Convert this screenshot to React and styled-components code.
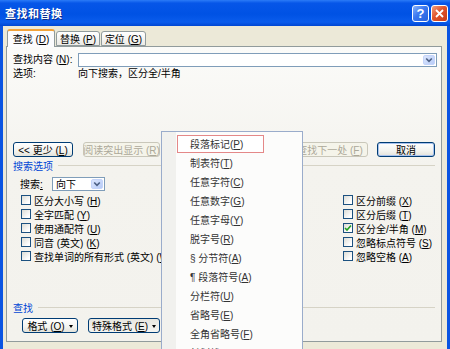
import React from 'react'
import styled, { createGlobalStyle } from 'styled-components'

const GlobalStyle = createGlobalStyle`
  html, body { margin: 0; padding: 0; }
  body {
    font-family: "Liberation Sans", "Noto Sans CJK SC", sans-serif;
    font-size: 10px;
    color: #000;
    background: #ECE9D8;
  }
  u { text-decoration: underline; text-underline-offset: 1px; }
`

const Window = styled.div`
  position: relative;
  width: 450px;
  height: 349px;
  overflow: hidden;
  display: flex;
  flex-direction: column;
  background: #ECE9D8;
`

const TitleBar = styled.div`
  height: 26px;
  flex: none;
  display: flex;
  align-items: center;
  padding: 0 2px 0 5px;
  box-sizing: border-box;
  background: linear-gradient(#2B7BF7, #0656E8 12%, #0052E4 55%, #0A5CEC 85%, #0046D2);
`

const Title = styled.span`
  color: #fff;
  font-weight: bold;
  font-size: 11px;
  letter-spacing: 0.5px;
  text-shadow: 1px 1px 0 #0A2A8A;
`

const TitleButtons = styled.div`
  margin-left: auto;
  display: flex;
  gap: 2px;
`

const TitleButton = styled.div`
  width: 17px;
  height: 17px;
  box-sizing: border-box;
  border: 1px solid #fff;
  border-radius: 3px;
  display: flex;
  align-items: center;
  justify-content: center;
  color: #fff;
  font: bold 13px "Liberation Sans", sans-serif;
  background: ${p => p.$close
    ? 'linear-gradient(135deg, #F0A080, #E0542C 45%, #C83A16)'
    : 'linear-gradient(135deg, #8AB4FC, #3A78F0 45%, #2A62DC)'};
`

const Frame = styled.div`
  flex: 1;
  display: flex;
  flex-direction: column;
  border-left: 3px solid #0A54E2;
  border-right: 3px solid #0A54E2;
  padding: 3px 5px 0 3px;
`

const Tabs = styled.div`
  display: flex;
  align-items: flex-end;
  height: 17px;
  padding-left: 1px;
`

const Tab = styled.div`
  position: relative;
  z-index: ${p => (p.$active ? 2 : 1)};
  width: ${p => p.$w}px;
  height: ${p => (p.$active ? 18 : 15)}px;
  margin-bottom: ${p => (p.$active ? -1 : 0)}px;
  margin-left: ${p => (p.$first ? 0 : 1)}px;
  box-sizing: border-box;
  border: 1px solid #919B9C;
  border-bottom: ${p => (p.$active ? 'none' : '1px solid #919B9C')};
  border-top: ${p => (p.$active ? '2px solid #F2A33A' : '1px solid #919B9C')};
  border-radius: 3px 3px 0 0;
  background: ${p => (p.$active ? '#FCFCFE' : 'linear-gradient(#FFFFFF, #ECEBE6)')};
  display: flex;
  align-items: center;
  justify-content: center;
  padding-bottom: ${p => (p.$active ? 1 : 0)}px;
`

const Panel = styled.div`
  height: 296px;
  box-sizing: border-box;
  border: 1px solid #919B9C;
  background: linear-gradient(#FBFBF9, #F4F3EE 40%, #F3F2ED);
  padding: 6px 4px 0 6px;
  display: flex;
  flex-direction: column;
`

const FieldRow = styled.div`
  display: grid;
  grid-template-columns: 65px 1fr;
  align-items: center;
  height: ${p => p.$h}px;
  margin-top: ${p => p.$mt || 0}px;
  line-height: 12px;
`

const Combo = styled.div`
  height: ${p => p.$h || 14}px;
  width: ${p => (p.$w ? p.$w + 'px' : 'auto')};
  box-sizing: border-box;
  border: 1px solid #7F9DB9;
  background: #fff;
  display: flex;
  align-items: center;
  padding-left: 3px;
`

const ComboButton = styled.div`
  margin-left: auto;
  width: 12px;
  height: calc(100% - 2px);
  margin-right: 1px;
  box-sizing: border-box;
  border-radius: 2px;
  background: linear-gradient(135deg, #DCE6FD, #B8CCF8);
  border: 1px solid #C4D4FA;
  display: flex;
  align-items: center;
  justify-content: center;
`

const ButtonRow = styled.div`
  display: flex;
  align-items: center;
  gap: ${p => p.$gap || 8}px;
  margin-top: ${p => p.$mt}px;
  padding-left: ${p => p.$pl || 0}px;
`

const Button = styled.div`
  width: ${p => p.$w}px;
  height: 15px;
  margin-left: ${p => p.$ml || 0}px;
  box-sizing: border-box;
  border: 1px solid ${p => (p.$disabled ? '#C9C7BA' : '#003C74')};
  border-radius: 3px;
  color: ${p => (p.$disabled ? '#ACA899' : '#000')};
  background: ${p => p.$disabled
    ? '#F5F4EA'
    : p.$pressed
      ? 'linear-gradient(#E8E7E0, #F4F4F0)'
      : 'linear-gradient(#FFFFFF, #F3F3EF 60%, #E3E2DA)'};
  box-shadow: ${p => (p.$default ? 'inset 0 0 0 1px #A8C2EE' : 'none')};
  display: flex;
  align-items: center;
  justify-content: center;
  gap: 4px;
  white-space: nowrap;
`

const Caret = styled.span`
  width: 0;
  height: 0;
  border-left: 2.5px solid transparent;
  border-right: 2.5px solid transparent;
  border-top: 3px solid #000;
  margin-top: 1px;
`

const Heading = styled.div`
  display: flex;
  align-items: center;
  gap: 5px;
  height: 12px;
  margin-top: ${p => p.$mt}px;
  margin-right: 2px;
  color: #0046D5;
  &::after {
    content: '';
    flex: 1;
    height: 1px;
    background: #D6D3C6;
  }
`

const SearchRow = styled.div`
  display: flex;
  align-items: center;
  height: 13px;
  margin-top: 6px;
  padding-left: 7px;
`

const SearchLabel = styled.span`
  width: 32px;
`

const Checks = styled.div`
  display: grid;
  grid-template-columns: 322px auto;
  margin-top: 3px;
  padding-left: 8px;
`

const CheckColumn = styled.div`
  display: flex;
  flex-direction: column;
`

const CheckItem = styled.div`
  display: flex;
  align-items: center;
  gap: 3px;
  height: 14px;
  white-space: nowrap;
`

const Box = styled.span`
  width: 10px;
  height: 10px;
  box-sizing: border-box;
  border: 1px solid #1C5180;
  background: linear-gradient(135deg, #DCDCD5, #FFFFFF 80%);
  display: flex;
  align-items: center;
  justify-content: center;
`

const Menu = styled.div`
  position: absolute;
  left: 161px;
  top: 131px;
  width: 142px;
  height: 240px;
  box-sizing: border-box;
  border: 1px solid #9AACCB;
  background: linear-gradient(to right, #F1F1EE 0, #F1F1EE 14px, #FCFCFB 14px);
  padding-top: 2px;
  z-index: 10;
  color: #333;
`

const MenuItem = styled.div`
  height: 19px;
  display: flex;
  align-items: center;
  padding-left: 28px;
`

const MenuLabel = styled.span`
  display: inline-flex;
  align-items: center;
  height: 16px;
  margin-left: -13px;
  padding: 0 20px 0 12px;
  border: 1px solid ${p => (p.$active ? '#E48888' : 'transparent')};
  background: ${p => (p.$active ? '#FFFFFF' : 'transparent')};
  white-space: nowrap;
`

const Chevron = () => (
  <svg width="8" height="6" viewBox="0 0 8 6">
    <path d="M1.2 1.5 L4 4.3 L6.8 1.5" fill="none" stroke="#4D6185" strokeWidth="1.6" />
  </svg>
)

const Tick = () => (
  <svg width="8" height="8" viewBox="0 0 8 8">
    <path d="M1 4 L3 6 L7 1.5" fill="none" stroke="#21A121" strokeWidth="1.6" />
  </svg>
)

const leftChecks = [
  ['区分大小写 (', 'H', ')'],
  ['全字匹配 (', 'Y', ')'],
  ['使用通配符 (', 'U', ')'],
  ['同音 (英文) (', 'K', ')'],
  ['查找单词的所有形式 (英文) (', 'W', ')'],
]

const rightChecks = [
  ['区分前缀 (', 'X', ')'],
  ['区分后缀 (', 'T', ')'],
  ['区分全/半角 (', 'M', ')', true],
  ['忽略标点符号 (', 'S', ')'],
  ['忽略空格 (', 'A', ')'],
]

const menuItems = [
  ['段落标记(', 'P', ')'],
  ['制表符(', 'T', ')'],
  ['任意字符(', 'C', ')'],
  ['任意数字(', 'G', ')'],
  ['任意字母(', 'Y', ')'],
  ['脱字号(', 'R', ')'],
  ['§ 分节符(', 'A', ')'],
  ['¶ 段落符号(', 'A', ')'],
  ['分栏符(', 'U', ')'],
  ['省略号(', 'E', ')'],
  ['全角省略号(', 'F', ')'],
  ['长划线(', 'M', ')'],
]

const Check = ({ item }) => (
  <CheckItem>
    <Box>{item[3] && <Tick />}</Box>
    <span>{item[0]}<u>{item[1]}</u>{item[2]}</span>
  </CheckItem>
)

export default function App() {
  return (
    <Window>
      <GlobalStyle />
      <TitleBar>
        <Title>查找和替换</Title>
        <TitleButtons>
          <TitleButton>?</TitleButton>
          <TitleButton $close>
            <svg width="9" height="9" viewBox="0 0 9 9">
              <path d="M1 1 L8 8 M8 1 L1 8" stroke="#fff" strokeWidth="1.8" />
            </svg>
          </TitleButton>
        </TitleButtons>
      </TitleBar>

      <Frame>
        <Tabs>
          <Tab $active $first $w={48}><span>查找 (<u>D</u>)</span></Tab>
          <Tab $w={44}><span>替换 (<u>P</u>)</span></Tab>
          <Tab $w={45}><span>定位 (<u>G</u>)</span></Tab>
        </Tabs>

        <Panel>
          <FieldRow $h={14}>
            <span>查找内容 (<u>N</u>):</span>
            <Combo>
              <ComboButton><Chevron /></ComboButton>
            </Combo>
          </FieldRow>
          <FieldRow $h={12} $mt={1}>
            <span>选项:</span>
            <span>向下搜索，区分全/半角</span>
          </FieldRow>

          <ButtonRow $mt={62}>
            <Button $w={60}><span>&lt;&lt; 更少 (<u>L</u>)</span></Button>
            <Button $w={77} $ml={2} $disabled><span>阅读突出显示 (<u>R</u>)</span></Button>
            <Button $w={76} $ml={124} $disabled><span>查找下一处 (<u>F</u>)</span></Button>
            <Button $w={58} $ml={1} $default><span>取消</span></Button>
          </ButtonRow>

          <Heading $mt={2}>搜索选项</Heading>

          <SearchRow>
            <SearchLabel>搜索<u>:</u></SearchLabel>
            <Combo $w={53} $h={14}>
              <span>向下</span>
              <ComboButton><Chevron /></ComboButton>
            </Combo>
          </SearchRow>

          <Checks>
            <CheckColumn>
              {leftChecks.map((c, i) => <Check key={i} item={c} />)}
            </CheckColumn>
            <CheckColumn>
              {rightChecks.map((c, i) => <Check key={i} item={c} />)}
            </CheckColumn>
          </Checks>

          <Heading $mt={38}>查找</Heading>

          <ButtonRow $mt={5} $pl={9} $gap={10}>
            <Button $w={56}><span>格式 (<u>O</u>)</span><Caret /></Button>
            <Button $w={72} $pressed><span>特殊格式 (<u>E</u>)</span><Caret /></Button>
          </ButtonRow>
        </Panel>
      </Frame>

      <Menu>
        {menuItems.map((m, i) => (
          <MenuItem key={i}>
            <MenuLabel $active={i === 0}><span>{m[0]}<u>{m[1]}</u>{m[2]}</span></MenuLabel>
          </MenuItem>
        ))}
      </Menu>
    </Window>
  )
}
